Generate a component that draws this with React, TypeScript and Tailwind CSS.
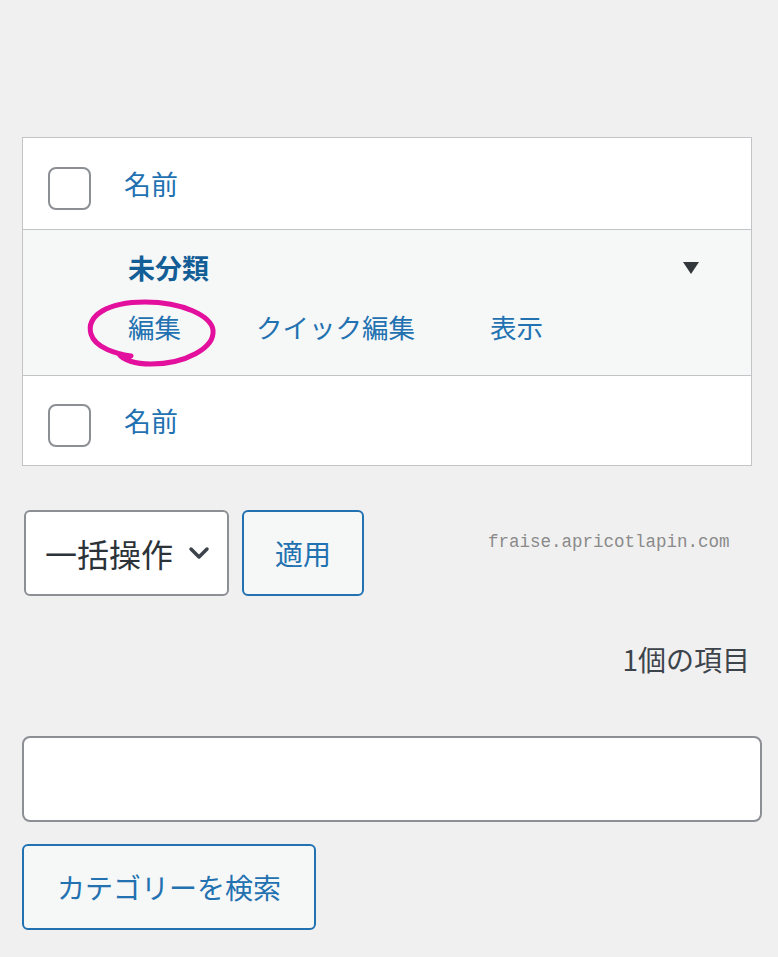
import React from "react"

const jp = { fontFamily: '"Noto Sans CJK JP", "Noto Sans", sans-serif' }

function Checkbox() {
  return <div className="w-[43px] h-[43px] mt-[10px] rounded-[8px] border-2 border-[#8c8f94] bg-white shrink-0" />
}

export default function App() {
  return (
    <div className="min-h-screen bg-[#f0f0f1] pt-[137px] pl-[22px] pr-[16px] pb-[26px]" style={jp}>
      {/* list table */}
      <div className="w-[730px] border border-[#c3c4c7] bg-white">
        <div className="h-[91px] flex items-center pl-[25px] gap-[33px]">
          <Checkbox />
          <span className="text-[27px] text-[#2271b1] leading-none">名前</span>
        </div>

        <div className="relative h-[147px] bg-[#f6f7f7] border-y border-[#c3c4c7] pl-[105px] pr-[52px] pt-[21px]">
          <div className="flex items-center justify-between">
            <span className="text-[27px] font-bold text-[#135e96] leading-[34px]">未分類</span>
            <span className="w-0 h-0 border-l-[8px] border-r-[8px] border-t-[12px] border-l-transparent border-r-transparent border-t-[#32373c]" />
          </div>
          <div className="flex items-center gap-[75px] mt-[25px] text-[26.5px] text-[#2271b1] leading-[34px]">
            <span>編集</span>
            <span>クイック編集</span>
            <span>表示</span>
          </div>
          {/* hand-drawn highlight */}
          <svg className="absolute left-0 top-0 pointer-events-none" width="260" height="147" viewBox="0 0 260 147">
            <path
              d="M108 126 C94 124 72 118 68 104 C63 86 84 72 122 72 C160 72 188 86 190 100 C192 118 162 134 128 134 C112 134 100 130 96 124"
              fill="none"
              stroke="#e3109e"
              strokeWidth="5"
              strokeLinecap="round"
            />
          </svg>
        </div>

        <div className="h-[89px] flex items-center pl-[25px] gap-[33px]">
          <Checkbox />
          <span className="text-[27px] text-[#2271b1] leading-none">名前</span>
        </div>
      </div>

      {/* bulk actions */}
      <div className="flex items-center mt-[44px] ml-[2px]">
        <div className="w-[205px] h-[86px] rounded-[6px] border-2 border-[#8c8f94] bg-white flex items-center pl-[19px] gap-[15px]">
          <span className="text-[32px] text-[#2c3338] leading-none">一括操作</span>
          <svg width="22" height="14" viewBox="0 0 22 14">
            <path d="M3 3 L11 11 L19 3" fill="none" stroke="#3c434a" strokeWidth="3.5" strokeLinecap="round" strokeLinejoin="round" />
          </svg>
        </div>
        <div className="ml-[13px] w-[122px] h-[86px] rounded-[6px] border-2 border-[#2271b1] bg-[#f6f7f7] flex items-center justify-center">
          <span className="text-[28px] text-[#2271b1] leading-none">適用</span>
        </div>
        <span
          className="ml-[124px] -mt-[22px] text-[17.5px] text-[#8a8a8a]"
          style={{ fontFamily: '"Liberation Mono", "DejaVu Sans Mono", monospace' }}
        >
          fraise.apricotlapin.com
        </span>
      </div>

      <div className="flex justify-end w-[728px] mt-[46px]">
        <span className="text-[28px] text-[#3c434a] leading-[34px]">1個の項目</span>
      </div>

      {/* search */}
      <div className="mt-[60px] w-[740px] h-[86px] rounded-[8px] border-2 border-[#8c8f94] bg-white" />
      <div className="mt-[22px] w-[294px] h-[86px] rounded-[6px] border-2 border-[#2271b1] bg-[#f6f7f7] flex items-center justify-center">
        <span className="text-[28px] text-[#2271b1] leading-none">カテゴリーを検索</span>
      </div>
    </div>
  )
}
